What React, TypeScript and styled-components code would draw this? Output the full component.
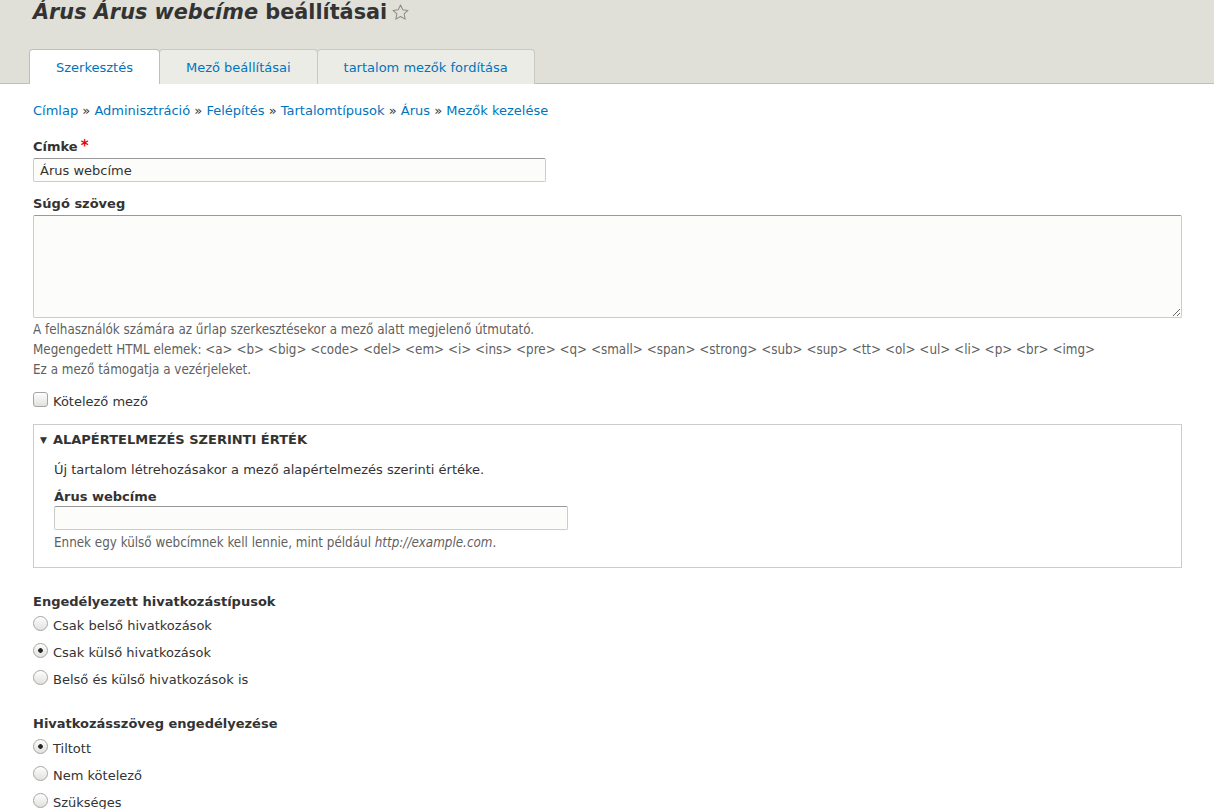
import React from "react";
import styled, { createGlobalStyle, css } from "styled-components";

const Global = createGlobalStyle`
  html, body { margin: 0; padding: 0; background: #fff; }
  body {
    font-family: "DejaVu Sans", Verdana, sans-serif;
    font-size: 13px;
    line-height: 20px;
    color: #333;
  }
  * { box-sizing: border-box; }
`;

const Header = styled.header`
  background: #e0e0d8;
  border-bottom: 1px solid #bebfb9;
  height: 84px;
  padding: 0 0 0 29px;
  display: flex;
  flex-direction: column;
  justify-content: space-between;
`;

const TitleRow = styled.div`
  display: flex;
  align-items: center;
  gap: 4px;
  padding-left: 4px;
  margin-top: -3px;
`;

const Title = styled.h1`
  margin: 0;
  font-size: 20.8px;
  line-height: 30px;
  font-weight: bold;
  color: #333;
  em { font-style: italic; }
`;

const Tabs = styled.ul`
  list-style: none;
  margin: 0 0 -1px 0;
  padding: 0;
  display: flex;
`;

const Tab = styled.li<{ $active?: boolean }>`
  height: 35px;
  padding: 1px 26px 0;
  display: flex;
  align-items: center;
  font-size: 13px;
  color: #0074bd;
  border: 1px solid #c9c9c3;
  border-bottom: none;
  border-radius: 4px 4px 0 0;
  margin-right: -1px;
  background: #ecece6;
  ${(p) =>
    p.$active &&
    css`
      background: #fff;
      border-color: #bebfb9;
      position: relative;
      z-index: 1;
    `}
`;

const Main = styled.main`
  padding: 17px 32px 0 33px;
`;

const Breadcrumb = styled.nav`
  font-size: 13px;
  line-height: 20px;
  color: #333;
  a { color: #0074bd; text-decoration: none; }
  margin-bottom: 16px;
`;

const Item = styled.div<{ $mb?: number }>`
  margin-bottom: ${(p) => p.$mb ?? 10}px;
`;

const Label = styled.label<{ $mb?: number }>`
  display: block;
  font-weight: bold;
  font-size: 13px;
  line-height: 20px;
  height: 20px;
  color: #333;
  margin-bottom: ${(p) => p.$mb ?? 1}px;
`;

const Req = styled.span`
  color: #e00;
  margin-left: 3px;
  font-size: 15px;
  line-height: 0;
`;

const TextInput = styled.input<{ $w: number }>`
  display: block;
  width: ${(p) => p.$w}px;
  height: 24px;
  border: 1px solid #ccc;
  border-top-color: #999;
  border-radius: 2px;
  background: #fcfcfa;
  padding: 2px 6px;
  font-family: "DejaVu Sans", sans-serif;
  font-size: 13px;
  color: #333;
  outline: none;
`;

const TextArea = styled.textarea`
  display: block;
  width: 100%;
  height: 103px;
  border: 1px solid #ccc;
  border-top-color: #999;
  border-radius: 2px;
  background: #fcfcfa;
  resize: vertical;
  font-family: "DejaVu Sans", sans-serif;
  font-size: 13px;
  outline: none;
`;

const Desc = styled.div<{ $mt?: number }>`
  font-family: "DejaVu Sans Condensed", "DejaVu Sans", sans-serif;
  font-size: 13.3px;
  line-height: 20px;
  color: #5f5f5f;
  margin-top: ${(p) => p.$mt ?? 2}px;
`;

const CheckRow = styled.label`
  display: flex;
  align-items: center;
  gap: 5px;
  font-size: 13px;
  color: #333;
  line-height: 20px;
`;

const controlBase = css`
  appearance: none;
  -webkit-appearance: none;
  margin: 0;
  width: 15px;
  height: 15px;
  border: 1px solid #a5a5a2;
  background: linear-gradient(#fdfdfd, #e1e1df);
  box-shadow: inset 0 1px 0 #fff;
  flex: none;
  position: relative;
  top: -3px;
`;

const CheckBox = styled.input.attrs({ type: "checkbox" })`
  ${controlBase};
  border-radius: 3px;
`;

const Radio = styled.input.attrs({ type: "radio" })`
  ${controlBase};
  border-radius: 50%;
  &:checked {
    background: radial-gradient(circle, #2a2a2a 0 2px, transparent 2.6px),
      linear-gradient(#fdfdfd, #e1e1df);
  }
`;

const Fieldset = styled.fieldset`
  margin: 12px 0 0 0;
  padding: 5px 20px 14px 20px;
  border: 1px solid #ccc;
  min-width: 0;
`;

const Legend = styled.div`
  display: flex;
  align-items: center;
  gap: 6px;
  margin-left: -14px;
  font-size: 13px;
  font-weight: bold;
  text-transform: uppercase;
  line-height: 20px;
  color: #333;
`;

const Caret = styled.span`
  font-size: 9px;
  line-height: 1;
`;

const FsText = styled.div`
  margin: 10px 0 7px;
  font-size: 13px;
  line-height: 20px;
`;

const Group = styled.div<{ $mt: number }>`
  margin-top: ${(p) => p.$mt}px;
`;

const Options = styled.div<{ $mt: number }>`
  display: flex;
  flex-direction: column;
  gap: 7px;
  margin-top: ${(p) => p.$mt}px;
`;

const Star = () => (
  <svg width="19" height="19" viewBox="0 0 24 24" fill="none" stroke="#8c8c84" strokeWidth="1.3" strokeLinejoin="round">
    <path d="M12 2.5l2.85 6.1 6.65.75-4.950 4.5 1.4 6.55L12 17.1l-5.95 3.3 1.4-6.55L2.5 9.35l6.65-.75z" />
  </svg>
);

const crumbs = ["Címlap", "Adminisztráció", "Felépítés", "Tartalomtípusok", "Árus", "Mezők kezelése"];

export default function App() {
  return (
    <>
      <Global />
      <Header>
        <TitleRow>
          <Title>
            <em>Árus Árus webcíme</em> beállításai
          </Title>
          <Star />
        </TitleRow>
        <Tabs>
          <Tab $active>Szerkesztés</Tab>
          <Tab>Mező beállításai</Tab>
          <Tab>tartalom mezők fordítása</Tab>
        </Tabs>
      </Header>
      <Main>
        <Breadcrumb>
          {crumbs.map((c, i) => (
            <React.Fragment key={c}>
              {i > 0 && " » "}
              <a href="#">{c}</a>
            </React.Fragment>
          ))}
        </Breadcrumb>
        <Item $mb={12}>
          <Label>
            Címke<Req>*</Req>
          </Label>
          <TextInput $w={513} defaultValue="Árus webcíme" />
        </Item>
        <Item $mb={12}>
          <Label>Súgó szöveg</Label>
          <TextArea />
          <Desc>
            A felhasználók számára az űrlap szerkesztésekor a mező alatt megjelenő útmutató.
            <br />
            Megengedett HTML elemek: &lt;a&gt; &lt;b&gt; &lt;big&gt; &lt;code&gt; &lt;del&gt; &lt;em&gt; &lt;i&gt; &lt;ins&gt; &lt;pre&gt; &lt;q&gt; &lt;small&gt; &lt;span&gt; &lt;strong&gt; &lt;sub&gt; &lt;sup&gt; &lt;tt&gt; &lt;ol&gt; &lt;ul&gt; &lt;li&gt; &lt;p&gt; &lt;br&gt; &lt;img&gt;
            <br />
            Ez a mező támogatja a vezérjeleket.
          </Desc>
        </Item>
        <CheckRow>
          <CheckBox />
          Kötelező mező
        </CheckRow>
        <Fieldset>
          <Legend>
            <Caret>▼</Caret>Alapértelmezés szerinti érték
          </Legend>
          <FsText>Új tartalom létrehozásakor a mező alapértelmezés szerinti értéke.</FsText>
          <Label $mb={-1}>Árus webcíme</Label>
          <TextInput $w={514} />
          <Desc $mt={3}>
            Ennek egy külső webcímnek kell lennie, mint például <em>http://example.com</em>.
          </Desc>
        </Fieldset>
        <Group $mt={24}>
          <Label $mb={0}>Engedélyezett hivatkozástípusok</Label>
          <Options $mt={4}>
            <CheckRow><Radio name="t" />Csak belső hivatkozások</CheckRow>
            <CheckRow><Radio name="t" defaultChecked />Csak külső hivatkozások</CheckRow>
            <CheckRow><Radio name="t" />Belső és külső hivatkozások is</CheckRow>
          </Options>
        </Group>
        <Group $mt={24}>
          <Label $mb={0}>Hivatkozásszöveg engedélyezése</Label>
          <Options $mt={5}>
            <CheckRow><Radio name="s" defaultChecked />Tiltott</CheckRow>
            <CheckRow><Radio name="s" />Nem kötelező</CheckRow>
            <CheckRow><Radio name="s" />Szükséges</CheckRow>
          </Options>
        </Group>
      </Main>
    </>
  );
}
